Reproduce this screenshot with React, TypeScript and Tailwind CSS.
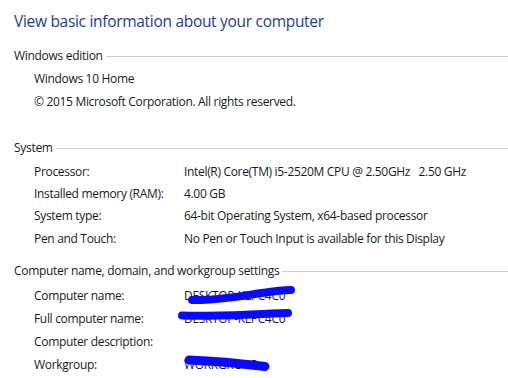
import React from "react";

const font = { fontFamily: '"Open Sans", "Noto Sans", sans-serif' };

function Header({ title }: { title: string }) {
  return (
    <div className="flex items-center h-[20px] pl-[14px]">
      <span className="text-[12px] text-[#1a1a1a] tracking-[-0.3px]">{title}</span>
      <div className="flex-1 h-px bg-[#cfcfcf] ml-[3px]" />
    </div>
  );
}

function Row({ label, value, h = "h-[23px]" }: { label: string; value?: string; h?: string }) {
  return (
    <div className={`flex items-center pl-[34px] ${h} text-[12px] text-[#1a1a1a] tracking-[-0.32px]`}>
      <span className="w-[150px] shrink-0 whitespace-nowrap">{label}</span>
      <span className="whitespace-pre">{value}</span>
    </div>
  );
}

export default function App() {
  return (
    <div className="relative w-[508px] h-[378px] bg-white overflow-hidden" style={font}>
      <div className="pl-[14px] pt-[10px] h-[46px] text-[15.5px] text-[#1e3c8c] tracking-[-0.3px]">
        View basic information about your computer
      </div>
      <Header title="Windows edition" />
      <div className="mt-[1.5px]">
        <Row label="Windows 10 Home" />
        <Row label="© 2015 Microsoft Corporation. All rights reserved." />
      </div>
      <div className="mt-[24.5px]">
        <Header title="System" />
      </div>
      <div className="mt-[3px]">
        <Row h="h-[22px]" label="Processor:" value="Intel(R) Core(TM) i5-2520M CPU @ 2.50GHz   2.50 GHz" />
        <Row h="h-[22px]" label="Installed memory (RAM):" value="4.00 GB" />
        <Row h="h-[22px]" label="System type:" value="64-bit Operating System, x64-based processor" />
        <Row h="h-[23px]" label="Pen and Touch:" value="No Pen or Touch Input is available for this Display" />
      </div>
      <div className="mt-[11px]">
        <Header title="Computer name, domain, and workgroup settings" />
      </div>
      <div className="mt-[3.5px]">
        <Row label="Computer name:" value="DESKTOP-KLPC4C0" />
        <Row label="Full computer name:" value="DESKTOP-KLPC4C0" />
        <Row label="Computer description:" />
        <Row label="Workgroup:" value="WORKGROUP" />
      </div>
      <svg className="absolute left-0 top-0 pointer-events-none" width="508" height="378" viewBox="0 0 508 378">
        <g stroke="#0a0aff" fill="none" strokeLinecap="round" strokeLinejoin="round">
          <path d="M192 300 C 215 301, 240 296, 262 293 C 275 291, 285 290, 291 290" strokeWidth="8" />
          <path d="M182 315.5 C 210 317, 250 314, 288 313" strokeWidth="8" />
          <path d="M189 360 C 215 361, 245 364, 265 366.5" strokeWidth="9" />
        </g>
      </svg>
    </div>
  );
}
